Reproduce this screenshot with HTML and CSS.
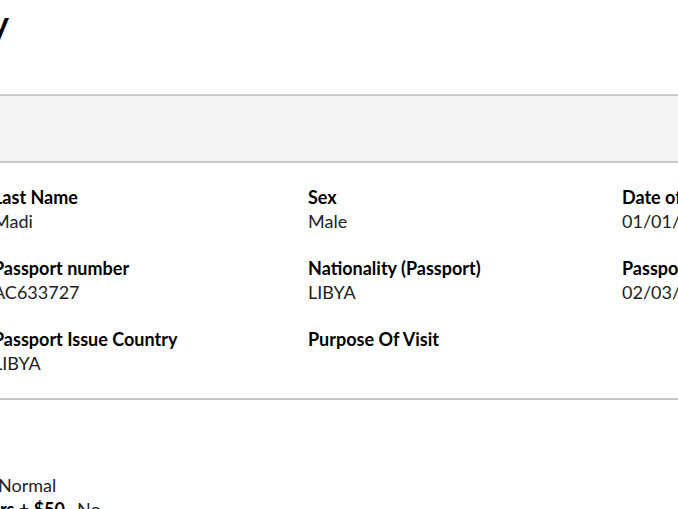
FILE: index.html
```html
<!DOCTYPE html>
<html lang="en">
<head>
<meta charset="utf-8">
<title>Application Summary</title>
<link rel="stylesheet" href="styles.css">
</head>
<body>
<div class="page">
  <div class="title-row">
    <h1 class="title">Application Summary</h1>
  </div>
  <div class="band"></div>
  <div class="fields">
    <div class="field">
      <div class="label">Last Name</div>
      <div class="value">Madi</div>
    </div>
    <div class="field">
      <div class="label">Sex</div>
      <div class="value">Male</div>
    </div>
    <div class="field">
      <div class="label">Date of Birth</div>
      <div class="value">01/01/1990</div>
    </div>
    <div class="field">
      <div class="label">Passport number</div>
      <div class="value">AC633727</div>
    </div>
    <div class="field">
      <div class="label">Nationality (Passport)</div>
      <div class="value">LIBYA</div>
    </div>
    <div class="field">
      <div class="label">Passport Expiry Date</div>
      <div class="value">02/03/2028</div>
    </div>
    <div class="field">
      <div class="label">Passport Issue Country</div>
      <div class="value">LIBYA</div>
    </div>
    <div class="field">
      <div class="label">Purpose Of Visit</div>
      <div class="value"></div>
    </div>
  </div>
  <div class="summary">
    <div class="line">
      <div class="line-label first"><b>Processing Type</b></div>
      <span class="line-value">Normal</span>
    </div>
    <div class="line">
      <div class="line-label second"><b>Additional Travellers + $50</b></div>
      <span class="line-value">No</span>
    </div>
  </div>
</div>
</body>
</html>
```
FILE: styles.css
```css
html, body {
  margin: 0;
  padding: 0;
  background: #fff;
}
body {
  overflow: hidden;
  font-family: "Lato", "Liberation Sans", sans-serif;
  color: #1b1b1b;
}
.page {
  width: 1000px;
  margin-left: -7px;
}
.title-row {
  display: flex;
  justify-content: flex-end;
  width: 16px;
  height: 94px;
  white-space: nowrap;
}
.title {
  margin: 3px 0 0 0;
  font-size: 34px;
  line-height: 40px;
  font-weight: 700;
  color: #000;
}
.band {
  height: 65px;
  background: #f3f3f3;
  border-top: 2px solid #c8c8c8;
  border-bottom: 2px solid #c8c8c8;
}
.fields {
  display: grid;
  grid-template-columns: 315px 314px 315px;
  row-gap: 23px;
  padding: 22px 0 23px 0;
  border-bottom: 2px solid #c4c4c4;
}
.field {
  font-size: 18px;
  line-height: 24px;
}
.label {
  font-weight: 700;
  color: #000;
  height: 24px;
}
.value {
  height: 24px;
  color: #222;
}
.summary {
  padding-top: 73px;
  margin-left: 7px;
  font-size: 18px;
  line-height: 24px;
}
.line {
  display: flex;
  gap: 8px;
  white-space: nowrap;
}
.line-label {
  display: flex;
  justify-content: flex-end;
  color: #000;
}
.line-label.first {
  width: 0;
  margin-left: -14px;
}
.line-label.second {
  width: 65px;
}
.line-value {
  color: #222;
  padding-left: 4px;
}
```
